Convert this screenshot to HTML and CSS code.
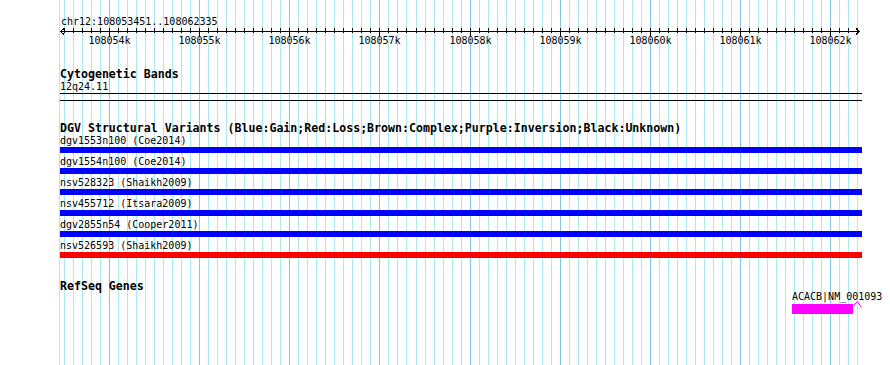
FILE: index.html
```html
<!DOCTYPE html>
<html lang="en">
<head>
    <meta charset="UTF-8">
    <title>Genome Browser - chr12</title>
    <link rel="stylesheet" href="styles.css">
</head>
<body>
<div class="browser">
    <svg class="grid" id="grid" width="890" height="365"></svg>

    <div class="locus">chr12:108053451..108062335</div>

    <svg class="ruler" id="ruler" width="890" height="20">
        <line class="ruler-line" x1="60" y1="3.5" x2="860" y2="3.5" />
        <polyline class="ruler-line" points="64,0.5 60.5,3.5 64,6.5" />
        <polyline class="ruler-line" points="856,0.5 859.5,3.5 856,6.5" />
    </svg>

    <!-- Cytogenetic bands -->
    <div class="track track-bands">
        <h2 class="track-title">Cytogenetic Bands</h2>
        <div class="feature-label">12q24.11</div>
        <div class="band"></div>
    </div>

    <!-- DGV structural variants -->
    <div class="track track-dgv">
        <h2 class="track-title">DGV Structural Variants (Blue:Gain;Red:Loss;Brown:Complex;Purple:Inversion;Black:Unknown)</h2>
        <div class="variant">
            <div class="feature-label">dgv1553n100 (Coe2014)</div>
            <div class="variant-bar gain"></div>
        </div>
        <div class="variant">
            <div class="feature-label">dgv1554n100 (Coe2014)</div>
            <div class="variant-bar gain"></div>
        </div>
        <div class="variant">
            <div class="feature-label">nsv528323 (Shaikh2009)</div>
            <div class="variant-bar gain"></div>
        </div>
        <div class="variant">
            <div class="feature-label">nsv455712 (Itsara2009)</div>
            <div class="variant-bar gain"></div>
        </div>
        <div class="variant">
            <div class="feature-label">dgv2855n54 (Cooper2011)</div>
            <div class="variant-bar gain"></div>
        </div>
        <div class="variant">
            <div class="feature-label">nsv526593 (Shaikh2009)</div>
            <div class="variant-bar loss"></div>
        </div>
    </div>

    <!-- RefSeq genes -->
    <div class="track track-genes">
        <h2 class="track-title">RefSeq Genes</h2>
        <div class="gene">
            <div class="feature-label gene-label">ACACB|NM_001093</div>
            <div class="gene-body">
                <div class="gene-exon"></div>
                <svg class="gene-intron" width="9" height="9">
                    <polyline points="0.5,4.5 4.5,0.5 8.5,6.5" />
                </svg>
            </div>
        </div>
    </div>
</div>

<script>
    const svgNS = 'http://www.w3.org/2000/svg';
    const grid = document.getElementById('grid');
    const ruler = document.getElementById('ruler');

    // 100 bp per minor line, 1 kb per major line
    const origin = 109;
    const step = 9.015;

    function addLine(parent, cls, x, y1, y2) {
        const line = document.createElementNS(svgNS, 'line');
        line.setAttribute('class', cls);
        line.setAttribute('x1', x);
        line.setAttribute('x2', x);
        line.setAttribute('y1', y1);
        line.setAttribute('y2', y2);
        parent.appendChild(line);
    }

    addLine(grid, 'grid-minor', 59.5, 0, 365);

    for (let k = -5; k <= 83; k++) {
        const x = Math.round(origin + k * step) + 0.5;
        const major = k % 10 === 0;
        addLine(grid, major ? 'grid-major' : 'grid-minor', x, 0, 365);
        addLine(ruler, 'ruler-line', x, 0, major ? 8 : 5);

        if (major) {
            const label = document.createElementNS(svgNS, 'text');
            label.setAttribute('x', x);
            label.setAttribute('y', 16);
            label.setAttribute('class', 'ruler-label');
            label.textContent = (108054 + k / 10) + 'k';
            ruler.appendChild(label);
        }
    }
</script>
</body>
</html>
```

FILE: styles.css
```css
:root {
    --grid-minor: #aaeaf0;
    --grid-major: #84c6ea;
    --gain-color: #0000ff;
    --loss-color: #ff0000;
    --gene-color: #ff00ff;
}
body {
    margin: 0;
    background-color: #fff;
    color: #000;
    font-family: "DejaVu Sans Mono", "Liberation Mono", monospace;
}
.browser {
    position: relative;
    z-index: 0;
    width: 890px;
    height: 365px;
    overflow: hidden;
}
.grid {
    position: absolute;
    top: 0;
    left: 0;
    z-index: -1;
}
.grid-minor {
    stroke: var(--grid-minor);
    stroke-width: 1;
    shape-rendering: crispEdges;
}
.grid-major {
    stroke: var(--grid-major);
    stroke-width: 1;
    shape-rendering: crispEdges;
}
.locus {
    padding: 16px 0 0 61px;
    font-size: 10px;
    line-height: 12px;
}
.ruler {
    display: block;
}
.ruler-line {
    stroke: #000;
    stroke-width: 1;
    fill: none;
    shape-rendering: crispEdges;
}
.ruler-label {
    font-family: "DejaVu Sans Mono", monospace;
    font-size: 10px;
    text-anchor: middle;
    fill: #000;
}
.track {
    margin-left: 60px;
    width: 802px;
}
.track-title {
    margin: 0;
    font-size: 11.6px;
    line-height: 13px;
    font-weight: bold;
    white-space: nowrap;
}
.feature-label {
    font-size: 10px;
    line-height: 12px;
    white-space: nowrap;
}
.track-bands {
    margin-top: 20px;
}
.band {
    margin-top: 0;
    height: 6px;
    border-top: 1px solid #000;
    border-bottom: 1px solid #000;
}
.track-dgv {
    margin-top: 21px;
}
.variant {
    padding-bottom: 3px;
}
.variant-bar {
    height: 6px;
}
.variant-bar.gain {
    background-color: var(--gain-color);
}
.variant-bar.loss {
    background-color: var(--loss-color);
}
.track-genes {
    margin-top: 19px;
}
.gene {
    margin: -1px 0 0 732px;
}
.gene-label {
    position: relative;
    z-index: 1;
    line-height: 10px;
}
.gene-body {
    display: flex;
    align-items: flex-start;
    margin-top: 2px;
}
.gene-exon {
    width: 61px;
    height: 10px;
    background-color: var(--gene-color);
}
.gene-intron {
    margin-top: -3px;
}
.gene-intron polyline {
    fill: none;
    stroke: var(--gene-color);
    stroke-width: 1;
}
```
